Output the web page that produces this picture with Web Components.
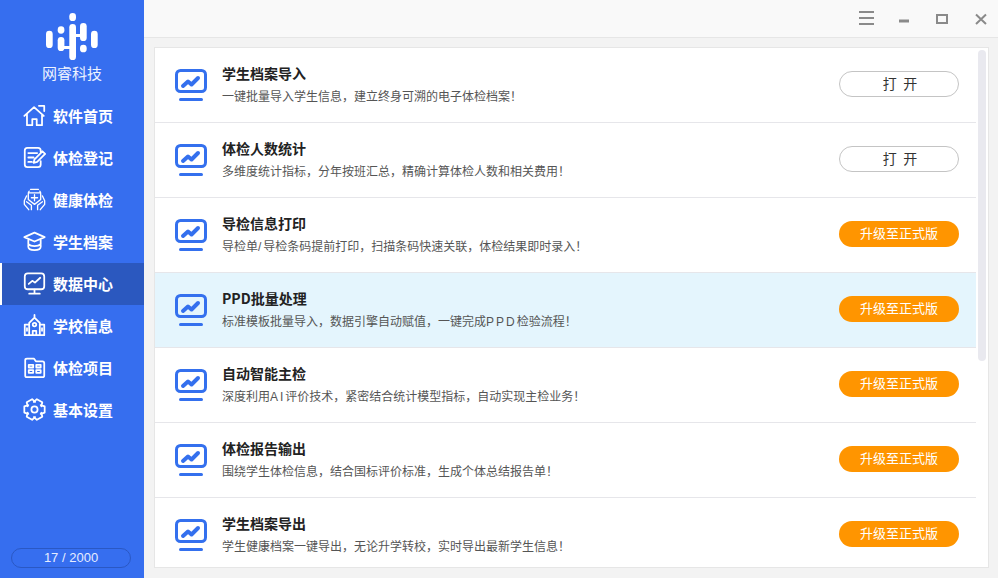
<!DOCTYPE html>
<html lang="zh">
<head>
<meta charset="utf-8">
<title>网睿科技</title>
<style>
    html, body { margin: 0; height: 100%; overflow: hidden; }
    body { font-family: "Noto Sans CJK SC", "Liberation Sans", sans-serif; }
</style>
</head>
<body>
<app-shell>
    <side-bar slot="side">
        <nav-item label="软件首页" icon="home"></nav-item>
        <nav-item label="体检登记" icon="edit"></nav-item>
        <nav-item label="健康体检" icon="care"></nav-item>
        <nav-item label="学生档案" icon="cap"></nav-item>
        <nav-item label="数据中心" icon="screen" active></nav-item>
        <nav-item label="学校信息" icon="school"></nav-item>
        <nav-item label="体检项目" icon="folder"></nav-item>
        <nav-item label="基本设置" icon="gear"></nav-item>
    </side-bar>
    <title-bar slot="top"></title-bar>
    <list-panel slot="main">
        <feature-row title="学生档案导入" desc="一键批量导入学生信息，建立终身可溯的电子体检档案！" action="open"></feature-row>
        <feature-row title="体检人数统计" desc="多维度统计指标，分年按班汇总，精确计算体检人数和相关费用！" action="open"></feature-row>
        <feature-row title="导检信息打印" desc="导检单<span>/</span>导检条码提前打印，扫描条码快速关联，体检结果即时录入！"></feature-row>
        <feature-row title="PPD批量处理" desc="标准模板批量导入，数据引擎自动赋值，一键完成<span>PPD</span>检验流程！" hover></feature-row>
        <feature-row title="自动智能主检" desc="深度利用<span>AI</span>评价技术，紧密结合统计模型指标，自动实现主检业务！"></feature-row>
        <feature-row title="体检报告输出" desc="围绕学生体检信息，结合国标评价标准，生成个体总结报告单！"></feature-row>
        <feature-row title="学生档案导出" desc="学生健康档案一键导出，无论升学转校，实时导出最新学生信息！"></feature-row>
    </list-panel>
</app-shell>

<script>
// six rounded teeth, one pointing left and one right
function gearPath() {
    let d = '';
    for (let k = 0; k < 6; k++) {
        const a = k * Math.PI / 3;
        const pts = [[8.6, -0.62], [12, -0.3], [12, 0.3], [8.6, 0.62]];
        for (const [r, o] of pts) {
            const x = 13 + r * Math.cos(a + o);
            const y = 13 + r * Math.sin(a + o);
            d += (d ? 'L' : 'M') + x.toFixed(1) + ' ' + y.toFixed(1);
        }
    }
    return d + 'Z';
}

const ICONS = {
    home: '<path d="M1.500 13.500 12.500 3.500l11 10M4.500 11.500V24h6v-7h5v7h6V11.500M18 2h6v6"/>',
    edit: '<path d="M20 7V5c0-2-1-3-3-3H5C3 2 2 3 2 5v16c0 2 1 3 3 3h12c2 0 3-1 3-3v-4M6 8h10M6 13h6M6 18h4M12 19l1-4 9-9 3 3-9 9z"/>',
    care: '<g stroke-width="1.500"><path d="M8.500 1.500h9M7 3.500C6 4.500 6 5.500 6 6.500V13l7 5.500 7-5.500V6.500c0-1 0-2-1-3M6 5.500h14M13 7.500v7M9.500 11h7M4 9 1.500 14.500v4l5 6M22 9l2.500 5.500v4l-5 6M4 15.500l5.500 4v5M22 15.500l-5.500 4v5"/></g>',
    cap: '<path d="M1.500 8 13 3l11.500 5L13 13zM6 11v8c0 5 14 5 14 0v-8M6 16c3 3 11 3 14 0"/>',
    screen: '<rect x="2" y="1.500" width="22" height="18" rx="3.500"/><path d="M6.500 13.500l4-3.500 3 2 6-5.500M13 20v4M7 24.500h12"/>',
    school: '<path d="M13 1v3M7 10l6-6 6 6v14H7zM7 12H2v12h22V12h-5M11 24v-5h4v5M4.500 16v3M21.500 16v3"/><circle cx="13" cy="12" r="2"/>',
    folder: '<path d="M2.500 6V4.500C2.500 3.500 3.500 3 4.500 3h8l2 3h7.500c1.500 0 2 1 2 2v14c0 1-.5 2-2 2H4.500c-1.500 0-2-1-2-2z"/><rect x="6.500" y="10" width="5" height="3"/><rect x="15" y="10" width="5" height="3"/><rect x="6.500" y="16" width="5" height="3"/><rect x="15" y="16" width="5" height="3"/>',
    gear: `<path d="${gearPath()}"/><circle cx="13" cy="13" r="3.500"/>`
};

class AppShell extends HTMLElement {
    constructor() {
        super();
        this.attachShadow({mode: 'open'});
        this.shadowRoot.innerHTML = `
            <style>
                :host { display: grid; grid-template-columns: 144px 1fr; grid-template-rows: 38px 1fr; width: 998px; height: 578px; background: #f3f3f3; }
                .side { grid-row: 1 / 3; display: flex; min-height: 0; }
                .main { padding: 9px 9px 10px 10px; min-height: 0; display: flex; }
            </style>
            <div class="side"><slot name="side"></slot></div>
            <div><slot name="top"></slot></div>
            <div class="main"><slot name="main"></slot></div>
        `;
    }
}

class SideBar extends HTMLElement {
    constructor() {
        super();
        this.attachShadow({mode: 'open'});
        this.shadowRoot.innerHTML = `
            <style>
                :host { display: flex; flex-direction: column; width: 144px; background: #366eef; color: #fff; }
                .brand { display: flex; flex-direction: column; align-items: center; padding-top: 13px; height: 95px; box-sizing: border-box; }
                .brand svg { display: block; flex: none; }
                .name { font-size: 15px; line-height: 20px; margin-top: 3px; color: #eef3ff; }
                nav { flex: 1; display: flex; flex-direction: column; }
                .quota { margin: 0 13px 10px 11px; height: 18px; border: 1px solid #2a58c4; border-radius: 10px; text-align: center; font: 13px/18px "Liberation Sans", sans-serif; color: #e6edff; }
            </style>
            <div class="brand">
                <svg width="52" height="47" viewBox="0 0 52 47" fill="#fff">
                    <rect x="0" y="17.700" width="6.700" height="17.300" rx="3.350"/>
                    <rect x="11.700" y="13.300" width="6.700" height="7.400" rx="3.350"/>
                    <rect x="11.700" y="24" width="6.700" height="14" rx="3.350"/>
                    <rect x="23.300" y="0" width="6.700" height="8" rx="3.350"/>
                    <rect x="23.300" y="11" width="6.700" height="36" rx="3.350"/>
                    <rect x="34" y="10" width="6.700" height="18" rx="3.350"/>
                    <rect x="34" y="31.700" width="6.700" height="7.600" rx="3.350"/>
                    <rect x="45" y="17.700" width="6.700" height="17.300" rx="3.350"/>
                    <rect x="18" y="33" width="6" height="3"/>
                    <rect x="29.500" y="21" width="5" height="3"/>
                </svg>
                <div class="name">网睿科技</div>
            </div>
            <nav><slot></slot></nav>
            <div class="quota">17 / 2000</div>
        `;
    }
}

class NavItem extends HTMLElement {
    constructor() {
        super();
        this.attachShadow({mode: 'open'});
        this.shadowRoot.innerHTML = `
            <style>
                :host { display: flex; align-items: center; gap: 7px; height: 42px; padding: 0 0 2px 23px; box-sizing: border-box; font-size: 15px; font-weight: 700; color: #fff; }
                :host([active]) { background: #2b58bf; box-shadow: inset 2px 0 0 #fff; }
                svg { width: 23px; height: 23px; fill: none; stroke: #fff; stroke-width: 2; stroke-linejoin: round; stroke-linecap: round; flex: none; }
            </style>
            <svg viewBox="0 0 26 26">${ICONS[this.getAttribute('icon')]}</svg>
            <span>${this.getAttribute('label')}</span>
        `;
    }
}

class TitleBar extends HTMLElement {
    constructor() {
        super();
        this.attachShadow({mode: 'open'});
        this.shadowRoot.innerHTML = `
            <style>
                :host { display: flex; justify-content: flex-end; align-items: center; height: 38px; box-sizing: border-box; background: #f9f9f9; border-bottom: 1px solid #e6e6e6; padding: 0 11px 1px 0; gap: 27px; }
                svg { display: block; height: 14px; fill: none; stroke: #8a8a8a; stroke-width: 2; }
            </style>
            <svg width="15" viewBox="0 0 15 14" style="margin-right:-2px"><path d="M0 1h15M0 7h15M0 13h15"/></svg>
            <svg width="10" viewBox="0 0 10 14"><path d="M0 10h10" stroke-width="3"/></svg>
            <svg width="12" viewBox="0 0 12 14"><rect x="1" y="4" width="10" height="8"/></svg>
            <svg width="12" viewBox="0 0 12 14"><path d="M1 3.500l10 9.500M11 3.500 1 13"/></svg>
        `;
    }
}

class ListPanel extends HTMLElement {
    constructor() {
        super();
        this.attachShadow({mode: 'open'});
        this.shadowRoot.innerHTML = `
            <style>
                :host { display: flex; flex: 1; min-height: 0; min-width: 0; background: #fff; border: 1px solid #e6e6e6; overflow: hidden; }
                .rows { flex: 1; min-width: 0; height: 100%; overflow: hidden; }
                .track { width: 12px; flex: none; padding: 2px 2px 0; box-sizing: border-box; }
                .thumb { height: 311px; background: #e9e9ef; border-radius: 4px; }
            </style>
            <div class="rows"><slot></slot></div>
            <div class="track"><div class="thumb"></div></div>
        `;
    }
}

class FeatureRow extends HTMLElement {
    constructor() {
        super();
        this.attachShadow({mode: 'open'});
        const open = this.getAttribute('action') === 'open';
        this.shadowRoot.innerHTML = `
            <style>
                :host { display: flex; align-items: center; height: 75px; box-sizing: border-box; border-bottom: 1px solid #e6e6ea; padding: 0 17px 2px 20px; background: #fff; }
                :host([hover]) { background: #e4f5fd; }
                svg { width: 32px; height: 34px; flex: none; margin-right: 15px; fill: none; stroke: #3470ee; stroke-width: 3; stroke-linecap: round; stroke-linejoin: round; }
                .text { flex: 1; min-width: 0; margin-top: 2px; }
                h3 { margin: 0; font-size: 14px; line-height: 19px; font-weight: 700; color: #222; }
                p { margin: 6px 0 0; font: 12px/17px "Liberation Sans", "Noto Sans CJK SC", sans-serif; color: #555; }
                p span { letter-spacing: 2px; }
                button { width: 120px; height: 26px; border-radius: 13px; box-sizing: border-box; padding: 0 0 3px; cursor: pointer; font-family: "Noto Sans CJK SC", sans-serif; line-height: 1; }
                .open { background: #fff; border: 1px solid #c4c4c4; color: #333; font-size: 14px; padding-left: 2px; }
                .up { background: #ff9500; border: none; color: #fff; font-size: 13px; }
            </style>
            <svg viewBox="0 0 32 34">
                <rect x="1.500" y="3.500" width="29" height="21" rx="4"/>
                <path d="M8 19l5-4.500 3.500 3L23 11" stroke-width="4"/>
                <path d="M5.500 32.500h21"/>
            </svg>
            <div class="text">
                <h3>${this.getAttribute('title')}</h3>
                <p>${this.getAttribute('desc')}</p>
            </div>
            <button class="${open ? 'open' : 'up'}">${open ? '打&nbsp;&nbsp;开' : '升级至正式版'}</button>
        `;
    }
}

customElements.define('app-shell', AppShell);
customElements.define('side-bar', SideBar);
customElements.define('nav-item', NavItem);
customElements.define('title-bar', TitleBar);
customElements.define('list-panel', ListPanel);
customElements.define('feature-row', FeatureRow);
</script>
</body>
</html>
